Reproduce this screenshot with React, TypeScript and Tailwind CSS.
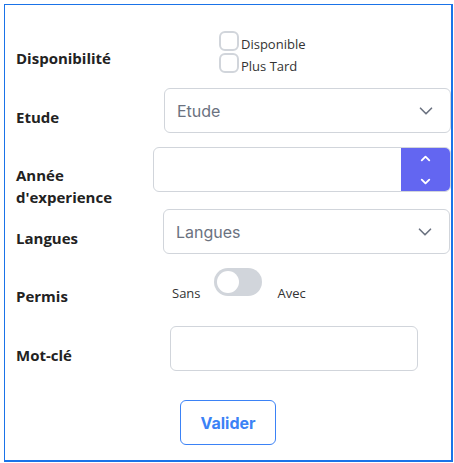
import { ChevronDown, ChevronUp } from "lucide-react";

const label = "text-[15px] leading-[22px] font-bold text-[#222] [font-family:'Open_Sans',sans-serif]";
const check = "flex h-5 items-start gap-[2px] text-[13px] text-[#333] [font-family:'Open_Sans',sans-serif]";

export default function App() {
  return (
    <div className="w-[454px] h-[463px] bg-white pt-1 pl-1">
      <div className="w-[449px] h-[458px] border border-r-2 border-b-2 border-[#1a73e8] flex flex-col pl-[11px] [font-family:Inter,sans-serif]">
        {/* Disponibilité */}
        <div className="flex items-start mt-[26px]">
          <div className={`${label} w-[138px] mt-[16px]`}>Disponibilité</div>
          <div className="ml-[65px] flex flex-col gap-[2px]">
            <label className={check}>
              <span className="w-5 h-5 rounded-md border-2 border-[#d1d5db] bg-white" />
              <span className="leading-[26px]">Disponible</span>
            </label>
            <label className={check}>
              <span className="w-5 h-5 rounded-md border-2 border-[#d1d5db] bg-white" />
              <span className="leading-[26px]">Plus Tard</span>
            </label>
          </div>
        </div>

        {/* Etude */}
        <div className="flex items-start mt-[15px]">
          <div className={`${label} w-[138px] mt-[18px]`}>Etude</div>
          <div className="ml-[10px] w-[287px] h-[45px] rounded-md border border-[#d1d5db] flex items-center justify-between pl-3 pr-[13px]">
            <span className="text-[16px] text-[#6b7280]">Etude</span>
            <ChevronDown size={22} strokeWidth={1.8} className="text-[#6b7280]" />
          </div>
        </div>

        {/* Année d'experience */}
        <div className="flex items-start mt-[14px]">
          <div className={`${label} w-[138px] mt-[17px]`}>
            Année
            <br />
            d'experience
          </div>
          <div className="w-[300px] h-[45px] rounded-md border border-[#d1d5db] flex overflow-hidden">
            <div className="flex-1" />
            <div className="w-[49px] bg-[#6366f1] flex flex-col items-center justify-center gap-[8px]">
              <ChevronUp size={15} strokeWidth={3} className="text-white" />
              <ChevronDown size={15} strokeWidth={3} className="text-white" />
            </div>
          </div>
        </div>

        {/* Langues */}
        <div className="flex items-start mt-[1px]">
          <div className={`${label} w-[138px] mt-[18px]`}>Langues</div>
          <div className="ml-[9px] w-[287px] h-[45px] rounded-md border border-[#d1d5db] flex items-center justify-between pl-3 pr-[13px]">
            <span className="text-[16px] text-[#6b7280]">Langues</span>
            <ChevronDown size={22} strokeWidth={1.8} className="text-[#6b7280]" />
          </div>
        </div>

        {/* Permis */}
        <div className="flex items-start mt-[14px]">
          <div className={`${label} w-[138px] mt-[17px]`}>Permis</div>
          <div className="ml-[18px] flex items-start text-[13px] text-[#333] [font-family:'Open_Sans',sans-serif]">
            <span className="mt-[16px]">Sans</span>
            <span className="ml-[13px] w-12 h-7 rounded-full bg-[#d1d5db] flex items-center px-[3px]">
              <span className="w-[22px] h-[22px] rounded-full bg-white" />
            </span>
            <span className="ml-[16px] mt-[16px]">Avec</span>
          </div>
        </div>

        {/* Mot-clé */}
        <div className="flex items-start mt-[19px]">
          <div className={`${label} w-[138px] mt-[18px]`}>Mot-clé</div>
          <div className="ml-[16px] w-[248px] h-[45px] rounded-md border border-[#d1d5db]" />
        </div>

        <div className="flex justify-center mt-[29px] pr-[11px]">
          <button className="w-[96px] h-[45px] rounded-md border border-[#3b82f6] text-[#3b82f6] font-bold text-[16px]">
            Valider
          </button>
        </div>
      </div>
    </div>
  );
}
